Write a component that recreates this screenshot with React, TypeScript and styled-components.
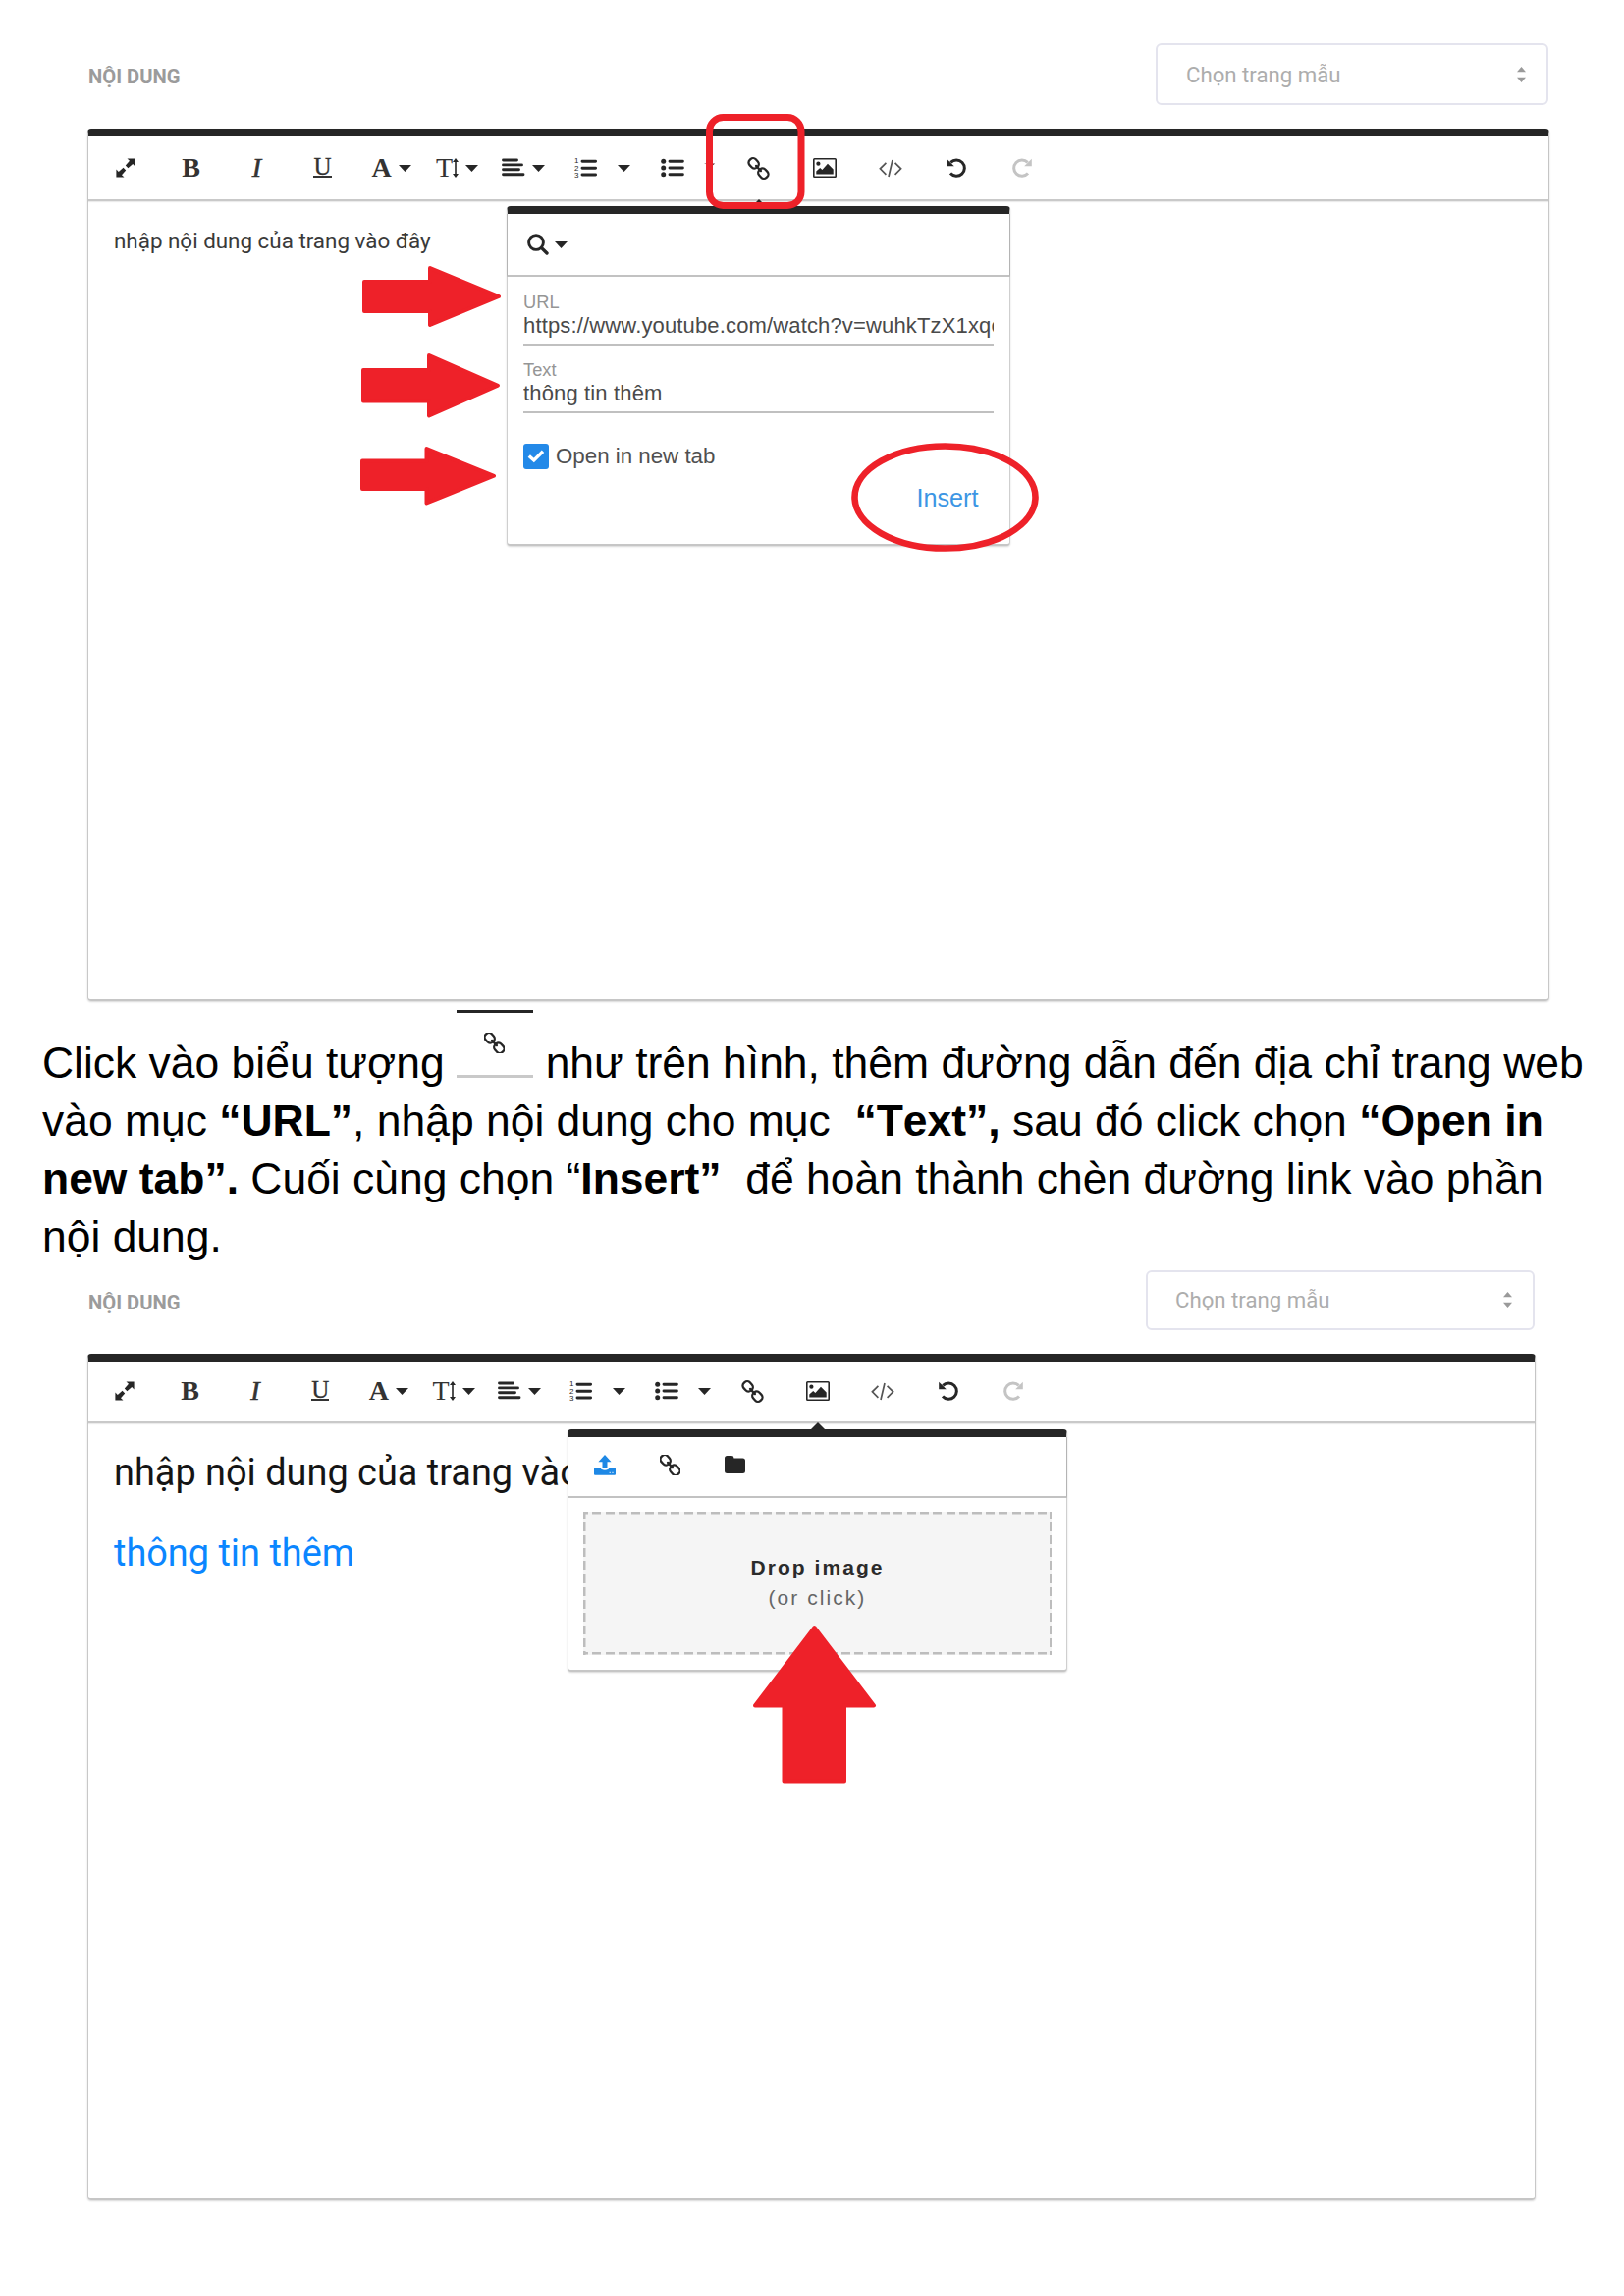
import React from 'react';
import styled, { createGlobalStyle } from 'styled-components';

const INK = '#262626';
const RED = '#ee2129';
const BLUE = '#1e88e5';

const GlobalStyle = createGlobalStyle`
  * { box-sizing: border-box; }
  body { margin: 0; background: #fff; }
`;

const Page = styled.main`
  width: 1654px;
  height: 2339px;
  background: #fff;
  overflow: hidden;
  font-family: Roboto, 'Noto Sans', sans-serif;
`;

const Section = styled.section<{ $width: number; $top: number }>`
  width: ${p => p.$width}px;
  margin-left: 89px;
  padding-top: ${p => p.$top}px;
`;

const SectionHead = styled.header<{ $height: number; $gap: number }>`
  display: flex;
  justify-content: space-between;
  align-items: center;
  height: ${p => p.$height}px;
  margin-bottom: ${p => p.$gap}px;
`;

const Label = styled.h2<{ $drop: number }>`
  margin: 0;
  padding: ${p => p.$drop}px 0 0 1px;
  font-size: 20.2px;
  font-weight: 700;
  line-height: 24px;
  color: #9b9b9b;
`;

const Select = styled.div<{ $width: number; $pad: number }>`
  display: flex;
  align-items: center;
  justify-content: space-between;
  width: ${p => p.$width}px;
  height: 100%;
  padding: 0 21px 0 ${p => p.$pad}px;
  margin-right: 1px;
  border: 2px solid #e4e4ee;
  border-radius: 6px;
  font-size: 22.2px;
  line-height: 30px;
  color: #adadad;
`;

const Editor = styled.div<{ $height: number }>`
  position: relative;
  display: flex;
  flex-direction: column;
  height: ${p => p.$height}px;
  border: 1px solid #c8c8c8;
  border-top: 8px solid ${INK};
  border-bottom: 2px solid #c6c6c6;
  border-radius: 4px;
  box-shadow: 0 1px 2px rgba(0, 0, 0, 0.16);
`;

const Toolbar = styled.div<{ $height: number }>`
  display: flex;
  flex: none;
  height: ${p => p.$height}px;
  padding-left: 4px;
  border-bottom: 2px solid #c9c9c9;
  box-shadow: 0 1px 1px rgba(0, 0, 0, 0.08);
`;

const ToolButton = styled.span<{ $unit: number; $faded?: boolean; $menu?: boolean }>`
  display: flex;
  align-items: center;
  justify-content: center;
  gap: 7px;
  flex: none;
  width: ${p => p.$unit}px;
  padding-left: ${p => (p.$menu ? 6 : 0)}px;
  color: ${p => (p.$faded ? '#c4c4c4' : INK)};
  svg { display: block; flex: none; overflow: visible; }
`;

const CaretButton = styled.span<{ $hidden?: boolean }>`
  display: flex;
  align-items: center;
  flex: none;
  width: 21px;
  color: ${INK};
  svg { display: block; flex: none; margin-left: -1.5px; visibility: ${p => (p.$hidden ? 'hidden' : 'visible')}; }
`;

const Letter = styled.span<{ $bold?: boolean; $italic?: boolean; $under?: boolean }>`
  font-family: 'Liberation Serif', serif;
  font-size: 28px;
  line-height: 20px;
  height: 20px;
  color: #333;
  font-weight: ${p => (p.$bold ? 700 : 400)};
  font-style: ${p => (p.$italic ? 'italic' : 'normal')};
  ${p => p.$italic && '-webkit-text-stroke: 0.6px #333;'}
  ${p => p.$under && 'font-size: 25px; line-height: 17px; border-bottom: 2px solid currentColor; -webkit-text-stroke: 0.3px #333;'}
`;

const Sized = styled.span`
  display: flex;
  align-items: center;
`;

const Content = styled.div<{ $size: number; $line: number; $top: number }>`
  padding: ${p => p.$top}px 0 0 26px;
  font-size: ${p => p.$size}px;
  line-height: ${p => p.$line}px;
  color: #333;
`;

const ContentLine = styled.p<{ $color: string }>`
  margin: 0;
  color: ${p => p.$color};
  white-space: nowrap;
`;

const Popup = styled.div<{ $left: number; $top: number; $width: number; $height: number }>`
  position: absolute;
  left: ${p => p.$left}px;
  top: ${p => p.$top}px;
  width: ${p => p.$width}px;
  height: ${p => p.$height}px;
  display: flex;
  flex-direction: column;
  background: #fff;
  border: 1px solid #cfcfcf;
  border-top: 8px solid ${INK};
  border-bottom: 2px solid #c6c6c6;
  border-radius: 4px;
  box-shadow: 0 1px 2px rgba(0, 0, 0, 0.16);
  font-family: 'Liberation Sans', Arial, sans-serif;
`;

const PopupBar = styled.div<{ $height: number; $pad: number; $gap: number; $lift?: number }>`
  display: flex;
  align-items: center;
  gap: ${p => p.$gap}px;
  height: ${p => p.$height}px;
  margin: 0 -1px;
  padding-left: ${p => p.$pad}px;
  padding-bottom: ${p => p.$lift ?? 0}px;
  color: ${INK};
  border: 1px solid #b4b4b4;
  border-top: 0;
  border-bottom: 2px solid #c2c2c2;
  svg { display: block; flex: none; }
`;

const Pointer = styled.i<{ $left: number }>`
  position: absolute;
  top: -15px;
  left: ${p => p.$left}px;
  border: 7px solid transparent;
  border-top: 0;
  border-bottom-color: ${INK};
`;

const LinkForm = styled.div`
  display: flex;
  flex-direction: column;
  padding: 14.5px 16px 0;
`;

const Field = styled.div`
  height: 69.3px;
`;

const FieldLabel = styled.div`
  font-size: 18.3px;
  line-height: 21px;
  height: 22px;
  color: #959595;
`;

const FieldValue = styled.div`
  font-size: 22px;
  line-height: 26.4px;
  height: 33.5px;
  letter-spacing: 0.15px;
  overflow: hidden;
  white-space: nowrap;
  color: #4a4a4a;
  border-bottom: 2px solid #c0c0c0;
`;

const CheckRow = styled.div`
  display: flex;
  align-items: center;
  gap: 7px;
  height: 26px;
  margin-top: 16.5px;
  font-size: 22.3px;
  line-height: 26px;
  color: #505050;
`;

const CheckBox = styled.span`
  display: flex;
  align-items: center;
  justify-content: center;
  width: 26px;
  height: 26px;
  border-radius: 3px;
  background: #2389e8;
`;

const InsertButton = styled.div`
  align-self: flex-end;
  margin: 14px 15.5px 0 0;
  font-size: 25.2px;
  line-height: 30px;
  color: #3c96e4;
`;

const DropZone = styled.div`
  display: flex;
  flex-direction: column;
  align-items: center;
  margin: 14px 15px 0;
  height: 146px;
  padding-top: 41.5px;
  font-size: 21px;
  line-height: 31px;
  letter-spacing: 2.05px;
  color: #666;
  background:
    repeating-linear-gradient(90deg, #bdbdbd 0 9px, transparent 9px 13.35px) -4px 0 / 105% 2.5px no-repeat,
    repeating-linear-gradient(90deg, #bdbdbd 0 9px, transparent 9px 13.35px) -4px 100% / 105% 2.5px no-repeat,
    repeating-linear-gradient(180deg, #bdbdbd 0 9px, transparent 9px 13.1px) 0 -2px / 2.5px 150px no-repeat,
    repeating-linear-gradient(180deg, #bdbdbd 0 9px, transparent 9px 13.1px) 100% -2px / 2.5px 150px no-repeat,
    #f5f5f5;
`;

const DropTitle = styled.strong`
  color: #2b2b2b;
`;

const Guide = styled.div`
  margin: 34.5px 0 0 43px;
  font-family: 'Liberation Sans', Arial, sans-serif;
  font-size: 44.44px;
  font-kerning: none;
  color: #000;
`;

const GuideLine = styled.p`
  display: flex;
  align-items: flex-end;
  margin: 0;
  height: 58.9px;
  line-height: 58.9px;
  white-space: pre;
`;

const InlineShot = styled.span`
  display: flex;
  justify-content: center;
  flex: none;
  width: 78px;
  height: 68.5px;
  margin: 0 13px 15.5px 12px;
  padding: 20px 0 0 0;
  color: ${INK};
  border-top: 3.5px solid ${INK};
  border-bottom: 3px solid #c9c9c9;
`;

const Overlay = styled.svg<{ $left: number; $top: number }>`
  position: absolute;
  left: ${p => p.$left}px;
  top: ${p => p.$top}px;
  overflow: visible;
  pointer-events: none;
`;

const Caret = () => (
  <svg width="13" height="7" viewBox="0 0 13 7"><path d="M0 0H13L6.5 7Z" fill="currentColor" /></svg>
);

const ExpandIcon = () => (
  <svg width="20" height="20" viewBox="0 0 20 20" fill="currentColor">
    <path d="M11.5 0.4H19.6V8.5L17.2 6 12.4 10.2 9.8 7.6 14 2.8Z" />
    <path d="M8.5 19.6H0.4V11.5L2.8 14 7.6 9.8 10.2 12.4 6 17.2Z" />
    <path d="M7.2 7.2L12.8 12.8" stroke="#fff" strokeWidth="1.8" />
  </svg>
);

const HeightIcon = () => (
  <svg width="6" height="20" viewBox="0 0 6 20" fill="currentColor">
    <path d="M3 0L6 4H3.8V16H6L3 20 0 16H2.2V4H0Z" />
  </svg>
);

const AlignIcon = () => (
  <svg width="24" height="20" viewBox="0 0 24 20" fill="none" stroke="currentColor" strokeWidth="2.9" strokeLinecap="round">
    <path d="M1.5 2H15.5M1.5 6.9H20.5M1.5 11.8H17.5M1.5 16.8H22" />
  </svg>
);

const ListNumber = styled.text`
  font-family: 'Liberation Sans', sans-serif;
  font-size: 8px;
  fill: currentColor;
`;

const OrderedIcon = () => (
  <svg width="23" height="24" viewBox="0 -1 23 24">
    <ListNumber x="0" y="6.2">1</ListNumber>
    <ListNumber x="0" y="13.9">2</ListNumber>
    <ListNumber x="0" y="21.4">3</ListNumber>
    <path d="M8 4.3H21.6M8 11.3H21.6M8 18H21.6" stroke="currentColor" strokeWidth="2.9" strokeLinecap="round" />
  </svg>
);

const BulletIcon = () => (
  <svg width="24" height="20" viewBox="0 0 24 20" fill="currentColor">
    <circle cx="2.7" cy="3.2" r="2.5" /><circle cx="2.7" cy="10" r="2.5" /><circle cx="2.7" cy="16.8" r="2.5" />
    <path d="M9 3.2H22.4M9 10H22.4M9 16.8H22.4" stroke="currentColor" strokeWidth="2.9" strokeLinecap="round" />
  </svg>
);

const LinkIcon = () => (
  <svg width="21" height="21" viewBox="0 0 20 20" fill="none" stroke="currentColor" strokeWidth="2.2">
    <g transform="rotate(47 10 10)">
      <rect x="-1.8" y="5.9" width="10" height="8.2" rx="3.6" />
      <rect x="11.8" y="5.9" width="10" height="8.2" rx="3.6" />
      <path d="M6.6 10H13.4" strokeLinecap="round" />
    </g>
  </svg>
);

const ImageIcon = () => (
  <svg width="24" height="20" viewBox="0 0 24 20" fill="currentColor">
    <rect x="0.8" y="0.8" width="22.4" height="18.4" rx="0.8" fill="none" stroke="currentColor" strokeWidth="1.6" />
    <circle cx="5.4" cy="5.7" r="2.1" />
    <path d="M3.3 16.6V13.4L7.2 10 9.4 12 15 5.8 20.7 11.4V16.6Z" />
  </svg>
);

const CodeIcon = () => (
  <svg width="24" height="20" viewBox="0 0 24 20" fill="none" stroke="#555" strokeWidth="1.7">
    <path d="M7.4 4.8L1.4 10.8 7.4 16.8M16.6 4.8L22.6 10.8 16.6 16.8M14 2L10 19" />
  </svg>
);

const UndoIcon = ({ flip = false }: { flip?: boolean }) => (
  <svg width="20" height="20" viewBox="0 0 20 20">
    <g transform={flip ? 'translate(20 0) scale(-1 1)' : undefined}>
      <path d="M4.3 4.4A8.2 8.2 0 1 1 4 15.6" fill="none" stroke="currentColor" strokeWidth="3" />
      <path d="M0.2 0.8V8.2H7.8Z" fill="currentColor" />
    </g>
  </svg>
);

const SearchIcon = () => (
  <svg width="22" height="22" viewBox="0 0 22 22" fill="none" stroke="currentColor">
    <circle cx="9" cy="9" r="7.4" strokeWidth="2.9" />
    <path d="M14.6 14.6L20 20" strokeWidth="3.4" strokeLinecap="round" />
  </svg>
);

const UploadIcon = () => (
  <svg width="22" height="21" viewBox="0 0 22 21" fill={BLUE}>
    <path d="M11 0L17.6 7.2H13.5V13.4H8.5V7.2H4.4Z" />
    <path d="M1 13.6H6.6C7 15 8.5 15.7 11 15.7S15 15 15.4 13.6H21A1 1 0 0 1 22 14.6V19.8A1 1 0 0 1 21 20.8H1A1 1 0 0 1 0 19.8V14.6A1 1 0 0 1 1 13.6Z" />
    <path d="M15.6 18.3H16.8M18.4 18.3H19.6" stroke="#fff" strokeWidth="1" />
  </svg>
);

const FolderIcon = () => (
  <svg width="21" height="18" viewBox="0 0 21 18" fill="currentColor">
    <path d="M2.5 0H7A2.5 2.5 0 0 1 9.5 2.6H18.5A2.5 2.5 0 0 1 21 5.1V15.5A2.5 2.5 0 0 1 18.5 18H2.5A2.5 2.5 0 0 1 0 15.5V2.5A2.5 2.5 0 0 1 2.5 0Z" />
  </svg>
);

const SortIcon = () => (
  <svg width="9" height="16" viewBox="0 0 9 16" fill="#9a9a9a"><path d="M4.5 0L9 5.3H0ZM4.5 16L9 10.7H0Z" /></svg>
);

const CheckIcon = () => (
  <svg width="18" height="14" viewBox="0 0 18 14" fill="none" stroke="#fff" strokeWidth="3.4"><path d="M1.8 6.4L6.8 11 16 1.8" /></svg>
);

interface ToolsProps { unit: number; height: number; coveredCaret?: boolean }

const Tools = ({ unit, height, coveredCaret }: ToolsProps) => (
  <Toolbar $height={height}>
    <ToolButton $unit={unit}><ExpandIcon /></ToolButton>
    <ToolButton $unit={unit}><Letter $bold>B</Letter></ToolButton>
    <ToolButton $unit={unit}><Letter $italic>I</Letter></ToolButton>
    <ToolButton $unit={unit}><Letter $under>U</Letter></ToolButton>
    <ToolButton $unit={unit} $menu><Letter $bold>A</Letter><Caret /></ToolButton>
    <ToolButton $unit={unit} $menu><Sized><Letter>T</Letter><HeightIcon /></Sized><Caret /></ToolButton>
    <ToolButton $unit={unit} $menu><AlignIcon /><Caret /></ToolButton>
    <ToolButton $unit={unit}><OrderedIcon /></ToolButton>
    <CaretButton><Caret /></CaretButton>
    <ToolButton $unit={unit}><BulletIcon /></ToolButton>
    <CaretButton $hidden={coveredCaret}><Caret /></CaretButton>
    <ToolButton $unit={unit}><LinkIcon /></ToolButton>
    <ToolButton $unit={unit}><ImageIcon /></ToolButton>
    <ToolButton $unit={unit}><CodeIcon /></ToolButton>
    <ToolButton $unit={unit}><UndoIcon /></ToolButton>
    <ToolButton $unit={unit} $faded><UndoIcon flip /></ToolButton>
  </Toolbar>
);

interface ArrowProps { left: number; top: number; body: number; bodyTop: number; bodyHeight: number; tip: number; height: number }

const RightArrow = ({ left, top, body, bodyTop, bodyHeight, tip, height }: ArrowProps) => (
  <Overlay $left={left} $top={top} width={tip} height={height}>
    <path
      d={`M2 ${bodyTop + 2}H${body + 2}V2L${tip - 2} ${height / 2}L${body + 2} ${height - 2}V${bodyTop + bodyHeight - 2}H2Z`}
      fill={RED} stroke={RED} strokeWidth="4" strokeLinejoin="round"
    />
  </Overlay>
);

export default function App() {
  return (
    <Page>
      <GlobalStyle />
      <Section $width={1489} $top={44}>
        <SectionHead $height={63} $gap={24}>
          <Label $drop={4.5}>NỘI DUNG</Label>
          <Select $width={400} $pad={29}>Chọn trang mẫu<SortIcon /></Select>
        </SectionHead>
        <Editor $height={889}>
          <Tools unit={67} height={66} coveredCaret />
          <Content $size={22.4} $line={30} $top={24.5}>
            <ContentLine $color="#3a3a3a">nhập nội dung của trang vào đây</ContentLine>
          </Content>
          <Popup $left={426} $top={71} $width={513} $height={346}>
            <Pointer $left={249} />
            <PopupBar $height={64} $pad={20} $gap={6}><SearchIcon /><Caret /></PopupBar>
            <LinkForm>
              <Field>
                <FieldLabel>URL</FieldLabel>
                <FieldValue>https://www.youtube.com/watch?v=wuhkTzX1xqo</FieldValue>
              </Field>
              <Field>
                <FieldLabel>Text</FieldLabel>
                <FieldValue>thông tin thêm</FieldValue>
              </Field>
              <CheckRow><CheckBox><CheckIcon /></CheckBox>Open in new tab</CheckRow>
              <InsertButton>Insert</InsertButton>
            </LinkForm>
          </Popup>
          <Overlay $left={628.7} $top={-23} width={101} height={97}>
            <path d="M-2 50.6H9.2L6 53Z" fill="#5a2024" />
            <rect x="3.5" y="3.5" width="93.5" height="90" rx="14" fill="none" stroke={RED} strokeWidth="7" />
          </Overlay>
          <RightArrow left={279} top={132} body={67} bodyTop={14} bodyHeight={34} tip={141} height={62} />
          <RightArrow left={278} top={221} body={67} bodyTop={15} bodyHeight={35.5} tip={141} height={65.5} />
          <RightArrow left={276.5} top={316} body={65.5} bodyTop={12.5} bodyHeight={32.5} tip={138} height={59.5} />
          <Overlay $left={777.2} $top={312} width={191} height={111}>
            <ellipse cx="95.5" cy="55.5" rx="92" ry="52" fill="none" stroke={RED} strokeWidth="6.6" />
          </Overlay>
        </Editor>
      </Section>

      <Guide>
        <GuideLine>
          Click vào biểu tượng<InlineShot><LinkIcon /></InlineShot>như trên hình, thêm đường dẫn đến địa chỉ trang web
        </GuideLine>
        <GuideLine><span>vào mục <b>“URL”</b>, nhập nội dung cho mục  <b>“Text”,</b> sau đó click chọn <b>“Open in</b></span></GuideLine>
        <GuideLine><span><b>new tab”.</b> Cuối cùng chọn “<b>Insert”</b>  để hoàn thành chèn đường link vào phần</span></GuideLine>
        <GuideLine>nội dung.</GuideLine>
      </Guide>

      <Section $width={1475} $top={3.9}>
        <SectionHead $height={61} $gap={24}>
          <Label $drop={5}>NỘI DUNG</Label>
          <Select $width={396} $pad={28}>Chọn trang mẫu<SortIcon /></Select>
        </SectionHead>
        <Editor $height={862.5}>
          <Tools unit={66.4} height={63} />
          <Content $size={37.9} $line={82} $top={9.5}>
            <ContentLine $color="#151515">nhập nội dung của trang vào đây</ContentLine>
            <ContentLine $color="#0b86ff">thông tin thêm</ContentLine>
          </Content>
          <Popup $left={488} $top={69} $width={509} $height={247}>
            <Pointer $left={247} />
            <PopupBar $height={62} $pad={25.5} $gap={45} $lift={3}><UploadIcon /><LinkIcon /><FolderIcon /></PopupBar>
            <DropZone><DropTitle>Drop image</DropTitle><span>(or click)</span></DropZone>
          </Popup>
          <Overlay $left={677.2} $top={269} width={125} height={161}>
            <path d="M62.5 2L123 81.5H93V158.5H31.5V81.5H2Z" fill={RED} stroke={RED} strokeWidth="4" strokeLinejoin="round" />
          </Overlay>
        </Editor>
      </Section>
    </Page>
  );
}
